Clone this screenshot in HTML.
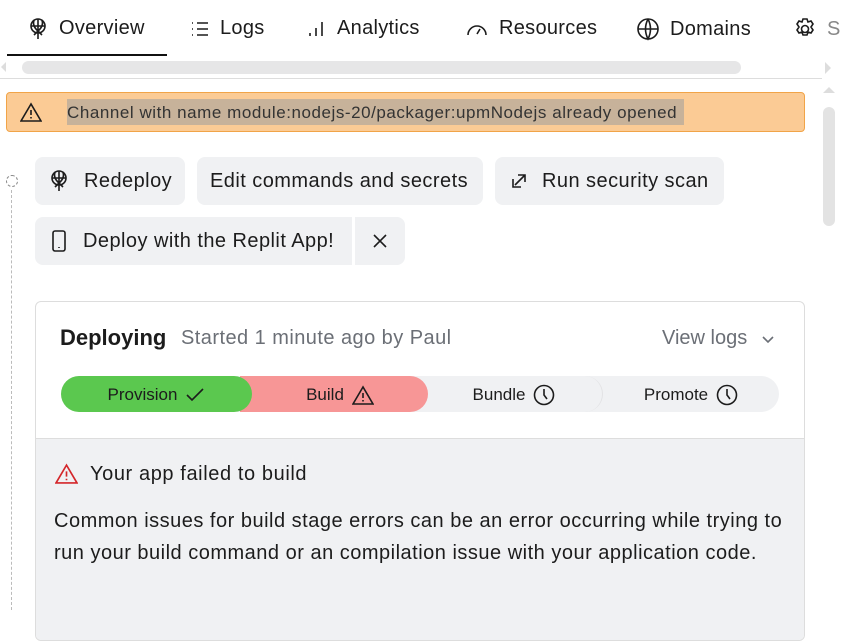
<!DOCTYPE html>
<html><head><meta charset="utf-8"><style>
*{box-sizing:border-box;margin:0;padding:0}
body{width:844px;height:598px;overflow:hidden;background:#fff;font-family:"Liberation Sans",sans-serif;color:#1c1c1c;position:relative}
.a{position:absolute;white-space:nowrap}
.tab{position:absolute;top:17px;font-size:20px;display:flex;align-items:center;gap:10px;letter-spacing:0.3px}
.btn{position:absolute;height:48px;background:#f0f1f3;border-radius:8px;display:flex;align-items:center;font-size:20px;padding-left:13px;gap:12px;letter-spacing:0.45px}
svg{fill:none;stroke:#1c1c1c;stroke-width:1.6}
.seg{position:absolute;top:376px;height:36px;display:flex;align-items:center;justify-content:center;gap:8px;font-size:17px;padding-top:2px}
</style></head><body>
<div class="tab" style="left:27px"><svg width="22" height="22" viewBox="0 0 22 22"><circle cx="11" cy="8" r="7"/><path d="M4 8h14M11 1v20M7 2q-2 6 4 11q6-5 4-11M7 17l4-4 4 4"/></svg>Overview</div>
<div class="a" style="left:7px;top:54px;width:160px;height:2px;background:#111"></div>
<div class="tab" style="left:190px"><svg width="20" height="20" viewBox="0 0 20 20"><path d="M2 4h1M2 10h1M2 16h1M7 4h11M7 10h11M7 16h11"/></svg>Logs</div>
<div class="tab" style="left:307px"><svg width="20" height="20" viewBox="0 0 20 20"><path d="M3 17v-3M9 17v-8M15 17V3"/></svg>Analytics</div>
<div class="tab" style="left:465px"><svg width="24" height="20" viewBox="0 0 24 20"><path d="M3 16a9 9 0 1 1 18 0M12 15l3-5"/></svg>Resources</div>
<div class="tab" style="left:636px"><svg width="24" height="24" viewBox="0 0 24 24"><circle cx="12" cy="12" r="10"/><path d="M2 12h20M12 2q-5 10 0 20q5-10 0-20"/></svg>Domains</div>
<div class="tab" style="left:793px"><svg width="24" height="24" viewBox="0 0 24 24"><circle cx="12" cy="12" r="3.5"/><path d="M10 2h4l1 3 3-1 2 3-2 3 2 3-2 3-3-1-1 3h-4l-1-3-3 1-2-3 2-3-2-3 2-3 3 1z"/></svg><span style="color:#888">S</span></div>
<div class="a" style="left:1px;top:62px;width:0;height:0;border:5px solid transparent;border-right-color:#ddd;border-left:0"></div>
<div class="a" style="left:22px;top:61px;width:719px;height:13px;background:#e6e6e7;border-radius:7px"></div>
<div class="a" style="left:825px;top:62px;width:0;height:0;border:6px solid transparent;border-left-color:#ddd;border-right:0"></div>
<div class="a" style="left:0;top:78px;width:822px;height:1px;background:#ddd"></div>
<div class="a" style="left:823px;top:87px;width:0;height:0;border:6px solid transparent;border-bottom-color:#ddd;border-top:0"></div>
<div class="a" style="left:823px;top:107px;width:12px;height:119px;background:#e3e3e3;border-radius:6px"></div>
<div class="a" style="left:6px;top:92px;width:799px;height:40px;background:#fbcb95;border:1px solid #f1a448;border-radius:4px"></div>
<svg class="a" style="left:20px;top:102px" width="22" height="20" viewBox="0 0 22 20"><path d="M11 2L1 19h20z M11 8v5M11 15v1.5"/></svg>
<div class="a" style="left:67px;top:99px;width:617px;height:26px;background:#c7b29a"></div>
<div class="a" style="left:67px;top:103px;font-size:17px;letter-spacing:0.55px;color:#333">Channel with name module:nodejs-20/packager:upmNodejs already opened</div>
<div class="a" style="left:6px;top:175px;width:12px;height:12px;border:1px dashed #888;border-radius:50%"></div>
<div class="a" style="left:11px;top:190px;height:420px;border-left:1px dashed #bbb"></div>
<div class="btn" style="left:35px;top:157px;width:150px;gap:14px"><svg width="22" height="22" viewBox="0 0 22 22"><circle cx="11" cy="8" r="7"/><path d="M4 8h14M11 1v20M7 2q-2 6 4 11q6-5 4-11M7 17l4-4 4 4"/></svg>Redeploy</div>
<div class="btn" style="left:197px;top:157px;width:286px">Edit commands and secrets</div>
<div class="btn" style="left:495px;top:157px;width:229px;padding-left:15px;gap:14px"><svg width="18" height="18" viewBox="0 0 18 18"><path d="M3 7V15h8M5 13L15 3M8 3h7v7"/></svg>Run security scan</div>
<div class="btn" style="left:35px;top:217px;width:317px;border-radius:8px 0 0 8px;padding-left:16px;gap:16px"><svg width="16" height="22" viewBox="0 0 16 22"><rect x="2" y="1" width="12" height="20" rx="2"/><path d="M8 17v1"/></svg>Deploy with the Replit App!</div>
<div class="btn" style="left:355px;top:217px;width:50px;border-radius:0 8px 8px 0;padding-left:17px"><svg width="16" height="16" viewBox="0 0 16 16"><path d="M2 2l12 12M14 2L2 14"/></svg></div>
<div class="a" style="left:35px;top:301px;width:770px;height:340px;border:1px solid #ddd;border-radius:6px;overflow:hidden">
<div class="a" style="left:0;top:136px;width:770px;height:220px;background:#f0f1f3;border-top:1px solid #ddd"></div>
</div>
<div class="a" style="left:60px;top:325px;font-size:22px;font-weight:bold">Deploying</div>
<div class="a" style="left:181px;top:327px;font-size:20px;color:#6b6f76;letter-spacing:0.45px">Started 1 minute ago by Paul</div>
<div class="a" style="left:662px;top:327px;font-size:20px;color:#6b6f76">View logs</div>
<svg class="a" style="left:761px;top:334px" width="14" height="10" viewBox="0 0 14 10"><path d="M2 3l5 5 5-5" style="stroke:#6b6f76"/></svg>
<div class="a" style="left:61px;top:376px;width:718px;height:36px;background:#f0f1f3;border-radius:18px"></div>
<div class="seg" style="left:426px;width:177px;border-radius:0 18px 18px 0;border-right:1px solid #e2e2e4">Bundle <svg width="22" height="22" viewBox="0 0 22 22"><circle cx="11" cy="11" r="9.5"/><path d="M11 5v6l3 4"/></svg></div>
<div class="seg" style="left:603px;width:176px">Promote <svg width="22" height="22" viewBox="0 0 22 22"><circle cx="11" cy="11" r="9.5"/><path d="M11 5v6l3 4"/></svg></div>
<div class="seg" style="left:240px;width:188px;background:#f79696;border-radius:0 18px 18px 0;padding-left:12px">Build <svg width="22" height="20" viewBox="0 0 22 20"><path d="M11 2L1 19h20z M11 8v5M11 15v1.5"/></svg></div>
<div class="seg" style="left:61px;width:191px;background:#5bc84f;border-radius:18px">Provision <svg width="20" height="16" viewBox="0 0 20 16"><path d="M2 8l5 5L18 2"/></svg></div>
<svg class="a" style="left:55px;top:463px" width="23" height="21" viewBox="0 0 22 20"><path d="M11 2L1 19h20z M11 8v5M11 15v1.5" style="stroke:#d4262a"/></svg>
<div class="a" style="left:90px;top:463px;font-size:20px;letter-spacing:0.6px">Your app failed to build</div>
<div class="a" style="left:54px;top:505px;font-size:20px;line-height:32px;letter-spacing:0.5px">Common issues for build stage errors can be an error occurring while trying to<br>run your build command or an compilation issue with your application code.</div>
</body></html>
